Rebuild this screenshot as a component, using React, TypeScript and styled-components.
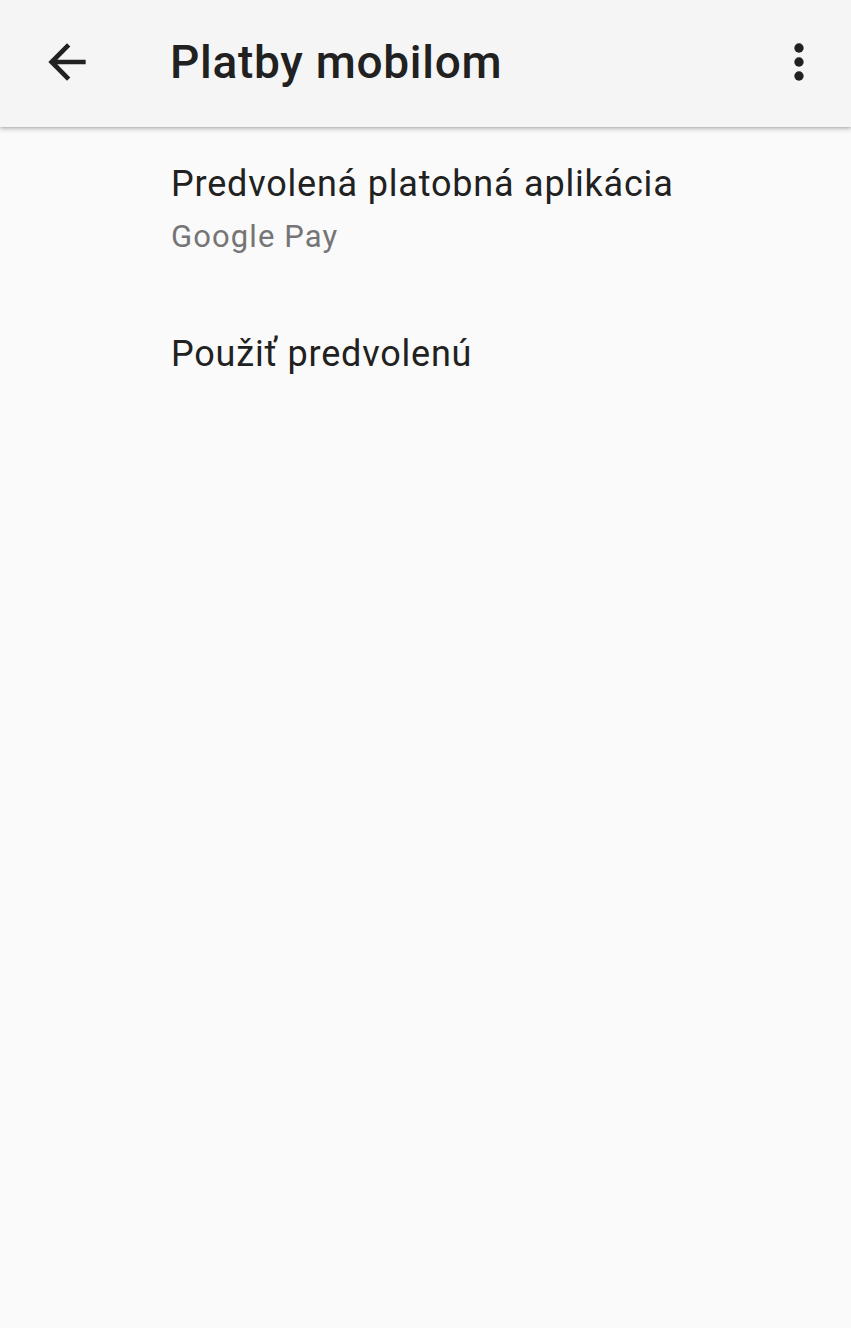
import React from 'react';
import styled, { createGlobalStyle } from 'styled-components';

const GlobalStyle = createGlobalStyle`
  html, body {
    margin: 0;
    padding: 0;
    background: #fafafa;
  }
  body {
    font-family: Roboto, "Noto Sans", "Liberation Sans", sans-serif;
    color: #212121;
  }
`;

const Screen = styled.div`
  min-height: 1328px;
  background: #fafafa;
`;

const Toolbar = styled.header`
  position: relative;
  z-index: 1;
  height: 127px;
  display: flex;
  align-items: center;
  background: #f5f5f5;
  box-shadow: 0 2px 5px rgba(0, 0, 0, 0.22), 0 1px 2px rgba(0, 0, 0, 0.12);
`;

const IconButton = styled.button<{ $side: 'left' | 'right' }>`
  width: 56px;
  height: 56px;
  padding: 0;
  border: none;
  background: transparent;
  display: flex;
  align-items: center;
  justify-content: center;
  color: #212121;
  margin-left: ${p => (p.$side === 'left' ? '39px' : '0')};
  margin-right: ${p => (p.$side === 'right' ? '24px' : '0')};
  margin-top: -4px;

  svg {
    width: 56px;
    height: 56px;
    fill: currentColor;
  }
`;

const Title = styled.h1`
  flex: 1;
  margin: 0 0 0 75px;
  padding-bottom: 3px;
  font-size: 46px;
  font-weight: 500;
  line-height: 56px;
  color: #212121;
  letter-spacing: 0.7px;
`;

const List = styled.div`
  display: flex;
  flex-direction: column;
`;

const Preference = styled.div<{ $height: number }>`
  min-height: ${p => p.$height}px;
  padding-left: 171px;
  padding-right: 40px;
  display: flex;
  flex-direction: column;
  justify-content: center;
  box-sizing: border-box;
`;

const PrefTitle = styled.div`
  font-size: 36px;
  line-height: 42px;
  color: #212121;
  letter-spacing: 0.8px;
`;

const PrefSummary = styled.div`
  margin-top: 14px;
  font-size: 31px;
  line-height: 36px;
  color: #757575;
  letter-spacing: 1.1px;
`;

const ArrowBack = () => (
  <svg viewBox="0 0 24 24" aria-hidden="true">
    <path d="M20 11H7.83l5.59-5.59L12 4l-8 8 8 8 1.41-1.41L7.83 13H20v-2z" />
  </svg>
);

const MoreVert = () => (
  <svg viewBox="0 0 24 24" aria-hidden="true">
    <circle cx="12" cy="6" r="2" />
    <circle cx="12" cy="12" r="2" />
    <circle cx="12" cy="18" r="2" />
  </svg>
);

const App: React.FC = () => {
  return (
    <>
      <GlobalStyle />
      <Screen>
        <Toolbar>
          <IconButton $side="left" aria-label="Späť">
            <ArrowBack />
          </IconButton>
          <Title>Platby mobilom</Title>
          <IconButton $side="right" aria-label="Ďalšie možnosti">
            <MoreVert />
          </IconButton>
        </Toolbar>

        <List>
          <Preference $height={163}>
            <PrefTitle>Predvolená platobná aplikácia</PrefTitle>
            <PrefSummary>Google Pay</PrefSummary>
          </Preference>
          <Preference $height={127}>
            <PrefTitle>Použiť predvolenú</PrefTitle>
          </Preference>
        </List>
      </Screen>
    </>
  );
};

export default App;
